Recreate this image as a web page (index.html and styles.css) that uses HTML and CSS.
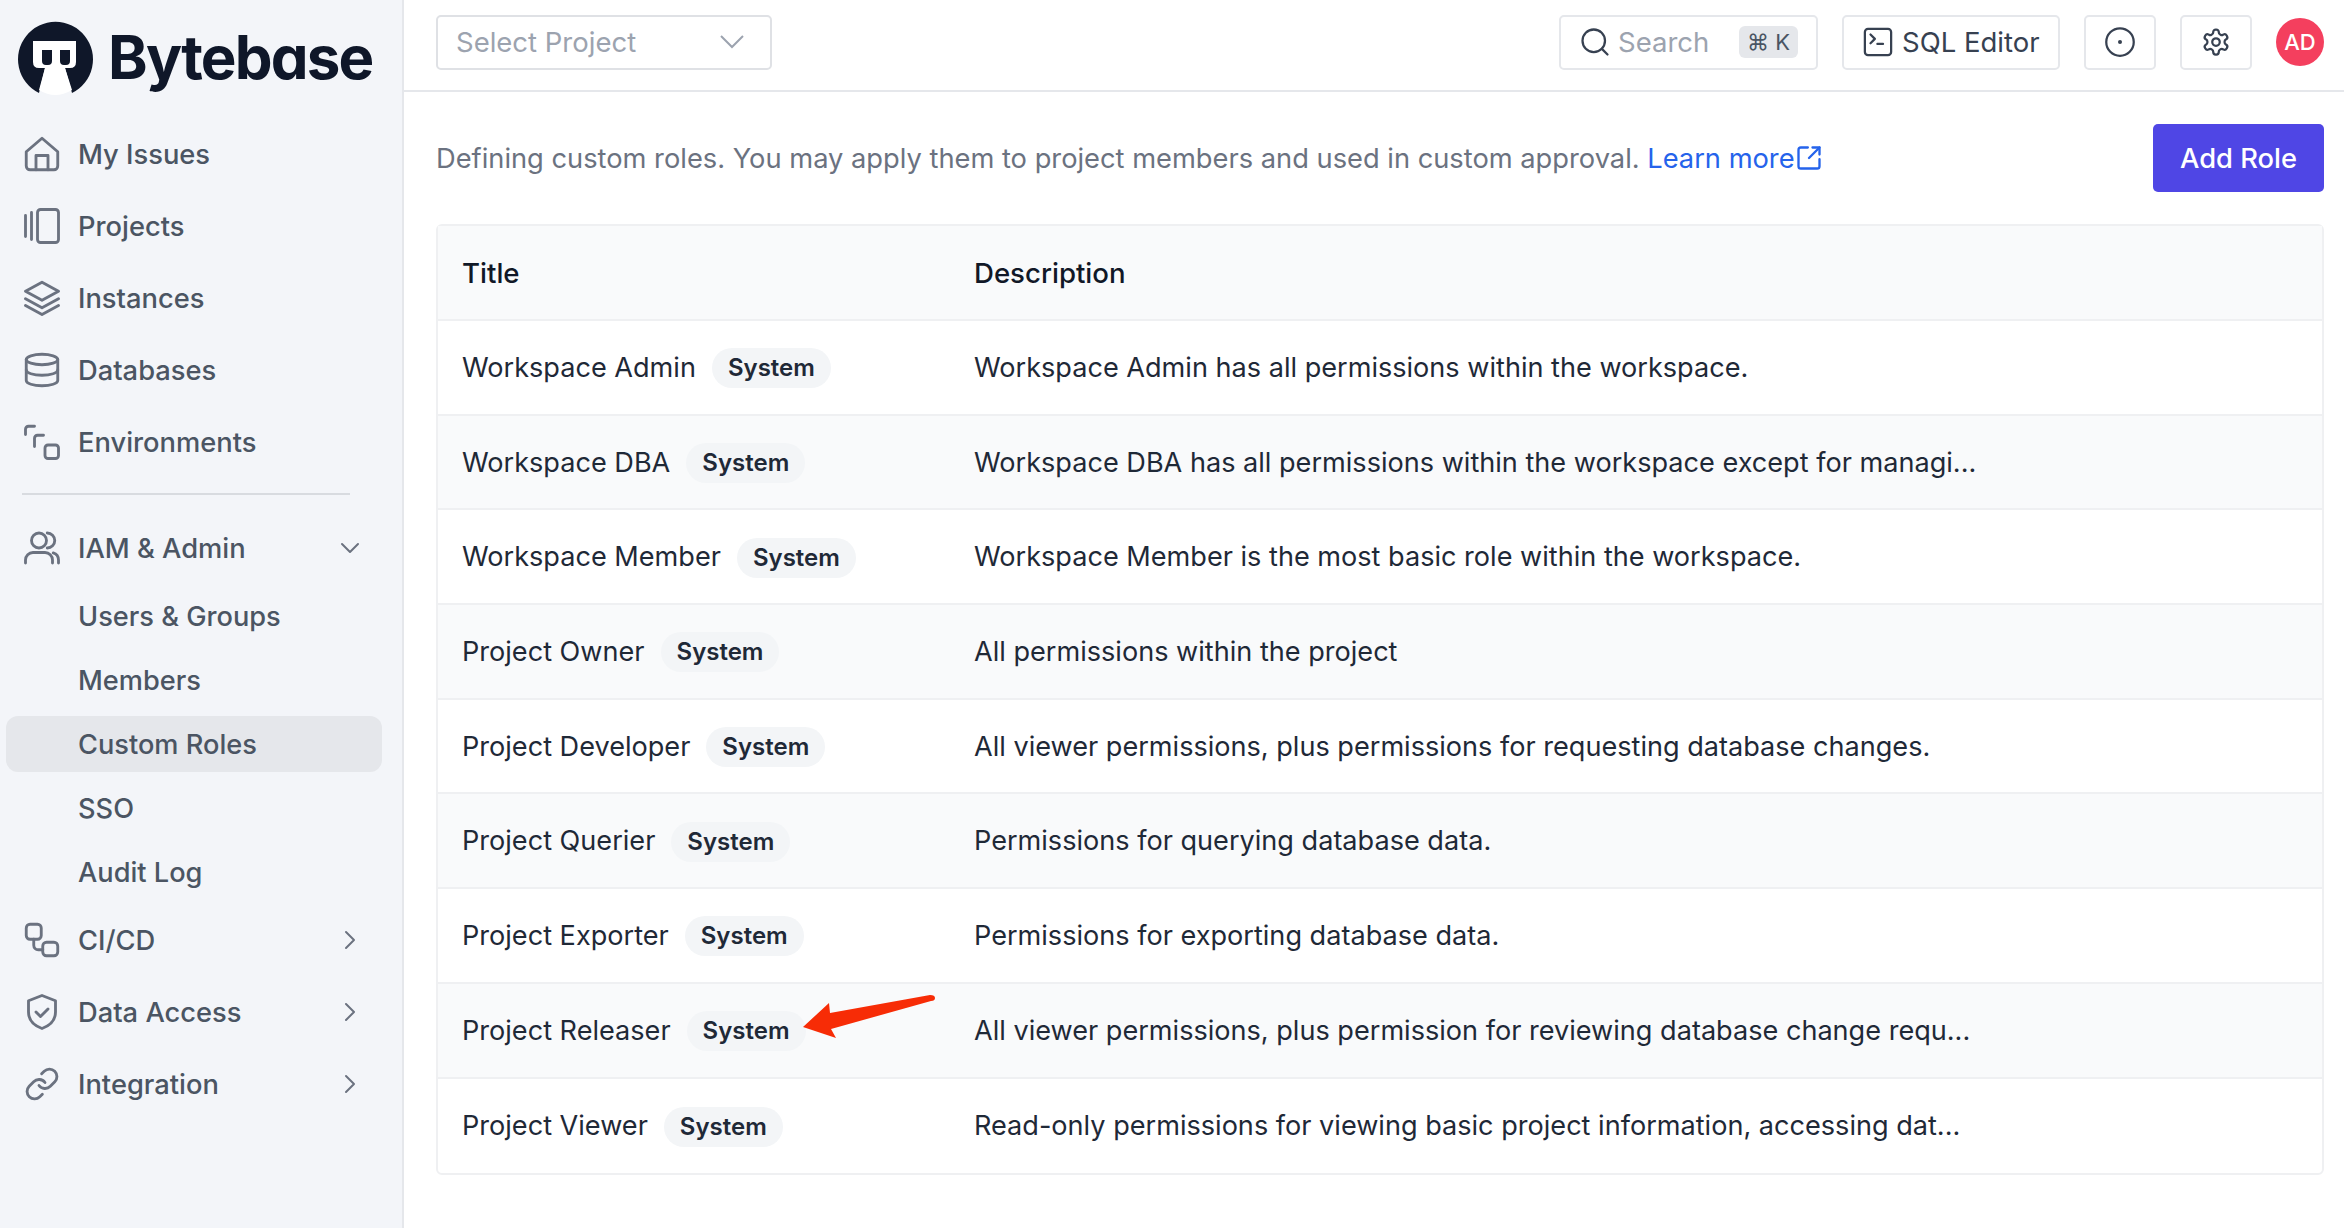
FILE: index.html
```html
<!DOCTYPE html>
<html lang="en">
<head>
    <meta charset="UTF-8">
    <title>Custom Roles - Bytebase</title>
    <link rel="stylesheet" href="styles.css">
</head>
<body>
<div class="app">
    <!-- sidebar -->
    <aside class="sidebar">
        <div class="brand">
            <svg class="brand-mark" viewBox="0 0 76 78">
                <path d="M22 75A37.500 37.500 0 1 1 55 75L48 50H28Z" fill="#0f1729"/>
                <path d="M16 23H59V44Q59 50 53 50H48L55 72Q38 82 22 72L28 50H22Q16 50 16 44Z" fill="#fff"/>
                <path d="M25 32H35V43Q35 47 31 47H29Q25 47 25 43ZM43 32H53V43Q53 47 49 47H47Q43 47 43 43Z" fill="#0f1729"/>
            </svg>
            <span class="brand-name">Bytebase</span>
        </div>
        <nav>
            <a class="nav-item">
                <svg class="icon" viewBox="0 0 24 24"><path d="M1.500 10.500 12 1.500l10.500 9V20a2.500 2.500 0 0 1-2.500 2.500H4A2.500 2.500 0 0 1 1.500 20Z"/><path d="M8 22.500V13h8v9.500"/></svg>
                <span>My Issues</span>
            </a>
            <a class="nav-item">
                <svg class="icon" viewBox="0 0 24 24"><rect x="9" y="1" width="14" height="22" rx="2"/><path d="M5 3v18M1 5v14"/></svg>
                <span>Projects</span>
            </a>
            <a class="nav-item">
                <svg class="icon" viewBox="0 0 24 24"><path d="M12 1.500 1 7.500l11 6 11-6Z"/><path d="m1 17 11 6 11-6"/><path d="m1 12.500 11 6 11-6"/></svg>
                <span>Instances</span>
            </a>
            <a class="nav-item">
                <svg class="icon" viewBox="0 0 24 24"><ellipse cx="12" cy="5" rx="10.500" ry="3.500"/><path d="M1.500 5v14c0 2 4.700 3.500 10.500 3.500S22.500 21 22.500 19V5"/><path d="M1.500 12c0 2 4.700 3.500 10.500 3.500S22.500 14 22.500 12"/></svg>
                <span>Databases</span>
            </a>
            <a class="nav-item">
                <svg class="icon" viewBox="0 0 24 24"><path d="M7 1.500H3A2 2 0 0 0 1 3.500V7"/><path d="M13 7.500H9A2 2 0 0 0 7 9.500V15"/><rect x="14" y="14" width="9" height="9" rx="2"/></svg>
                <span>Environments</span>
            </a>
            <div class="nav-divider"></div>
            <a class="nav-item">
                <svg class="icon" viewBox="0 0 24 24"><circle cx="10" cy="7" r="5"/><path d="M1 22v-2a5 5 0 0 1 5-5h8a5 5 0 0 1 5 5v2"/><path d="M23 22v-2a5 5 0 0 0-3.500-4.700"/><path d="M15.500 2a5 5 0 0 1 0 10"/></svg>
                <span>IAM &amp; Admin</span>
                <svg class="chevron" viewBox="0 0 24 24"><path d="m4 8 8 8 8-8"/></svg>
            </a>
            <div class="sub-list">
                <a class="sub-item">Users &amp; Groups</a>
                <a class="sub-item">Members</a>
                <a class="sub-item active">Custom Roles</a>
                <a class="sub-item">SSO</a>
                <a class="sub-item">Audit Log</a>
            </div>
            <a class="nav-item">
                <svg class="icon" viewBox="0 0 24 24"><rect x="1.500" y="1.500" width="10" height="10" rx="2.500"/><path d="M6.500 11.500v4a3 3 0 0 0 3 3h3"/><rect x="12.500" y="13.500" width="10" height="9" rx="2.500"/></svg>
                <span>CI/CD</span>
                <svg class="chevron" viewBox="0 0 24 24"><path d="m8 4 8 8-8 8"/></svg>
            </a>
            <a class="nav-item">
                <svg class="icon" viewBox="0 0 24 24"><path d="M12 1 3 4.500V12c0 5.500 3.500 9 9 11 5.500-2 9-5.500 9-11V4.500Z"/><path d="m8 12 3 3 5-5"/></svg>
                <span>Data Access</span>
                <svg class="chevron" viewBox="0 0 24 24"><path d="m8 4 8 8-8 8"/></svg>
            </a>
            <a class="nav-item">
                <svg class="icon" viewBox="0 0 24 24"><path d="M10 13a5 5 0 0 0 7.540.540l3-3a5 5 0 0 0-7.070-7.070l-1.720 1.710"/><path d="M14 11a5 5 0 0 0-7.540-.540l-3 3a5 5 0 0 0 7.070 7.070l1.710-1.710"/></svg>
                <span>Integration</span>
                <svg class="chevron" viewBox="0 0 24 24"><path d="m8 4 8 8-8 8"/></svg>
            </a>
        </nav>
    </aside>

    <div class="main">
        <!-- top bar -->
        <header class="topbar">
            <div class="select">
                <span>Select Project</span>
                <svg class="select-arrow" viewBox="0 0 24 24"><path d="m1 6 11 11L23 6"/></svg>
            </div>
            <div class="topbar-right">
                <div class="btn search">
                    <svg class="btn-icon" viewBox="0 0 24 24"><circle cx="11" cy="11" r="9"/><path d="m22 22-4.500-4.500"/></svg>
                    <span class="search-text">Search</span>
                    <kbd class="kbd">⌘ K</kbd>
                </div>
                <div class="btn sql">
                    <svg class="btn-icon" viewBox="0 0 24 24"><rect x="1.500" y="1.500" width="21" height="21" rx="2.500"/><path d="m6 6 3.500 3.500L6 13"/><path d="M11.500 13.500H16"/></svg>
                    <span>SQL Editor</span>
                </div>
                <div class="btn square">
                    <svg class="btn-icon" viewBox="0 0 24 24"><circle cx="12" cy="12" r="11"/><circle class="dot" cx="12" cy="12" r="1.600"/></svg>
                </div>
                <div class="btn square">
                    <svg class="btn-icon" viewBox="0 0 24 24"><path d="M12.220 2h-.44a2 2 0 0 0-2 2v.18a2 2 0 0 1-1 1.730l-.43.25a2 2 0 0 1-2 0l-.15-.08a2 2 0 0 0-2.730.73l-.22.38a2 2 0 0 0 .73 2.730l.15.1a2 2 0 0 1 1 1.720v.51a2 2 0 0 1-1 1.740l-.15.09a2 2 0 0 0-.73 2.730l.22.38a2 2 0 0 0 2.730.73l.15-.08a2 2 0 0 1 2 0l.43.25a2 2 0 0 1 1 1.730V20a2 2 0 0 0 2 2h.44a2 2 0 0 0 2-2v-.18a2 2 0 0 1 1-1.730l.43-.25a2 2 0 0 1 2 0l.15.08a2 2 0 0 0 2.730-.73l.22-.39a2 2 0 0 0-.73-2.730l-.15-.08a2 2 0 0 1-1-1.740v-.5a2 2 0 0 1 1-1.740l.15-.09a2 2 0 0 0 .73-2.730l-.22-.38a2 2 0 0 0-2.730-.73l-.15.08a2 2 0 0 1-2 0l-.43-.25a2 2 0 0 1-1-1.730V4a2 2 0 0 0-2-2z"/><circle cx="12" cy="12" r="3"/></svg>
                </div>
                <div class="avatar">AD</div>
            </div>
        </header>

        <!-- content -->
        <div class="content">
            <div class="intro">
                <p class="intro-text">Defining custom roles. You may apply them to project members and used in custom approval. <a class="link">Learn more<svg class="link-icon" viewBox="0 0 24 24"><path d="M21 13v6a2 2 0 0 1-2 2H5a2 2 0 0 1-2-2V5a2 2 0 0 1 2-2h6"/><path d="m21 3-9 9"/><path d="M15 3h6v6"/></svg></a></p>
                <button class="add-btn">Add Role</button>
            </div>

            <div class="table-wrap">
                <table class="roles">
                    <thead>
                        <tr><th class="col-title">Title</th><th>Description</th></tr>
                    </thead>
                    <tbody>
                        <tr><td><div class="role-cell">Workspace Admin<span class="badge">System</span></div></td><td>Workspace Admin has all permissions within the workspace.</td></tr>
                        <tr><td><div class="role-cell">Workspace DBA<span class="badge">System</span></div></td><td>Workspace DBA has all permissions within the workspace except for managi...</td></tr>
                        <tr><td><div class="role-cell">Workspace Member<span class="badge">System</span></div></td><td>Workspace Member is the most basic role within the workspace.</td></tr>
                        <tr><td><div class="role-cell">Project Owner<span class="badge">System</span></div></td><td>All permissions within the project</td></tr>
                        <tr><td><div class="role-cell">Project Developer<span class="badge">System</span></div></td><td>All viewer permissions, plus permissions for requesting database changes.</td></tr>
                        <tr><td><div class="role-cell">Project Querier<span class="badge">System</span></div></td><td>Permissions for querying database data.</td></tr>
                        <tr><td><div class="role-cell">Project Exporter<span class="badge">System</span></div></td><td>Permissions for exporting database data.</td></tr>
                        <tr><td><div class="role-cell">Project Releaser<span class="badge">System</span></div></td><td>All viewer permissions, plus permission for reviewing database change requ...</td></tr>
                        <tr><td><div class="role-cell">Project Viewer<span class="badge">System</span></div></td><td>Read-only permissions for viewing basic project information, accessing dat...</td></tr>
                    </tbody>
                </table>
                <!-- red annotation arrow drawn over the table -->
                <svg class="arrow" viewBox="0 0 134 46">
                    <path d="M0 32 26 8 27 18 127 0Q132 0 132 3 132 6 128 6L28 34 33 43Z"/>
                </svg>
            </div>
        </div>
    </div>
</div>
</body>
</html>
```

FILE: styles.css
```css
* { box-sizing: border-box; }
html, body { margin: 0; height: 100%; }
body { font-family: Inter, "Liberation Sans", sans-serif; color: #1f2937; background: #fff; overflow: hidden; }

.app { display: flex; height: 1228px; }

/** sidebar */
.sidebar { flex: 0 0 404px; background: #f3f5f9; border-right: 2px solid #e5e7eb; }
.brand { display: flex; align-items: center; gap: 15px; height: 118px; padding: 0 0 4px 17px; }
.brand-mark { width: 76px; height: 78px; flex: none; }
.brand-name { font-size: 60px; font-weight: 700; color: #0f1729; letter-spacing: -1.800px; line-height: 1; font-feature-settings: "cv11"; }

.nav-item { display: flex; align-items: center; height: 72px; padding-left: 24px; font-size: 27.300px; font-weight: 500; color: #4b5563; }
.nav-item span { flex: 1; margin-left: 18px; }
.icon { width: 36px; height: 36px; flex: none; fill: none; stroke: #6b7280; stroke-width: 1.900; stroke-linecap: round; stroke-linejoin: round; }
.chevron { width: 24px; height: 24px; margin-right: 40px; flex: none; fill: none; stroke: #6b7280; stroke-width: 2; stroke-linecap: round; stroke-linejoin: round; }
.nav-divider { height: 2px; margin: 15px 52px 17px 22px; background: #d8dbe0; }

.sub-list { display: flex; flex-direction: column; gap: 8px; margin: 4px 0; }
.sub-item { display: flex; align-items: center; height: 56px; margin: 0 20px 0 6px; padding-left: 72px; font-size: 27.200px; font-weight: 500; color: #4b5563; border-radius: 12px; }
.sub-item.active { background: #e5e7eb; }

/** top bar */
.main { flex: 1; display: flex; flex-direction: column; min-width: 0; }
.topbar { display: flex; align-items: center; justify-content: space-between; height: 92px; padding: 0 20px 6px 32px; border-bottom: 2px solid #e5e7eb; }
.select { display: flex; align-items: center; justify-content: space-between; width: 336px; height: 55px; padding: 0 26px 0 18px; border: 2px solid #dfe1e5; border-radius: 5px; font-size: 27.500px; color: #9ca3af; }
.select-arrow { width: 24px; height: 24px; fill: none; stroke: #9ca3af; stroke-width: 2; }

.topbar-right { display: flex; align-items: center; gap: 24px; }
.btn { display: flex; align-items: center; height: 55px; border: 2px solid #e5e7eb; border-radius: 5px; font-size: 27.500px; color: #374151; background: #fff; }
.btn-icon { width: 30px; height: 30px; flex: none; fill: none; stroke: #374151; stroke-width: 1.800; stroke-linecap: round; stroke-linejoin: round; }
.btn-icon .dot { fill: #374151; stroke: none; }
.search { width: 259px; padding: 0 18px 0 19px; }
.search-text { margin-left: 8px; flex: 1; color: #9ca3af; }
.kbd { padding: 3px 8px; border-radius: 6px; background: #e5e7eb; font-family: Inter, "DejaVu Sans", sans-serif; font-size: 22px; color: #4b5563; }
.sql { width: 218px; padding: 0 0 0 19px; gap: 9px; }
.square { width: 72px; justify-content: center; }
.avatar { display: flex; align-items: center; justify-content: center; width: 48px; height: 48px; border-radius: 50%; background: #f43f5e; color: #fff; font-size: 22px; font-weight: 500; }

/** content */
.content { padding: 0 20px 0 32px; }
.intro { display: flex; align-items: center; justify-content: space-between; height: 132px; }
.intro-text { margin: 0; font-size: 27.270px; color: #6b7280; }
.link { color: #2563eb; }
.link-icon { width: 28px; height: 28px; vertical-align: -4px; fill: none; stroke: #2563eb; stroke-width: 2; stroke-linecap: round; stroke-linejoin: round; }
.add-btn { width: 171px; height: 68px; border: 0; border-radius: 5px; background: #4f46e5; color: #fff; font: 500 27.300px Inter, "Liberation Sans", sans-serif; }

.table-wrap { position: relative; }
.roles { width: 100%; border-collapse: separate; border-spacing: 0; border: 2px solid #eff0f2; border-radius: 6px; font-size: 27.100px; color: #1f2937; }
.roles th, .roles td { height: 94.700px; padding: 0 24px; text-align: left; border-bottom: 2px solid #eff0f2; }
.roles tbody tr:last-child td { border-bottom: 0; }
.roles th { height: 95px; background: #f9fafb; font-size: 27.600px; font-weight: 500; color: #111827; }
.roles tbody tr:nth-child(even) td { background: #f9fafb; }
.col-title { width: 512px; }
.role-cell { display: flex; align-items: center; }
.badge { margin: 2px 0 0 16px; padding: 0 16px; height: 40px; line-height: 40px; border-radius: 20px; background: #f3f5f7; font-size: 24px; font-weight: 600; color: #1f2937; }
.arrow { position: absolute; left: 367px; top: 771px; width: 134px; height: 46px; }
.arrow path { fill: #f72c06; }
```
